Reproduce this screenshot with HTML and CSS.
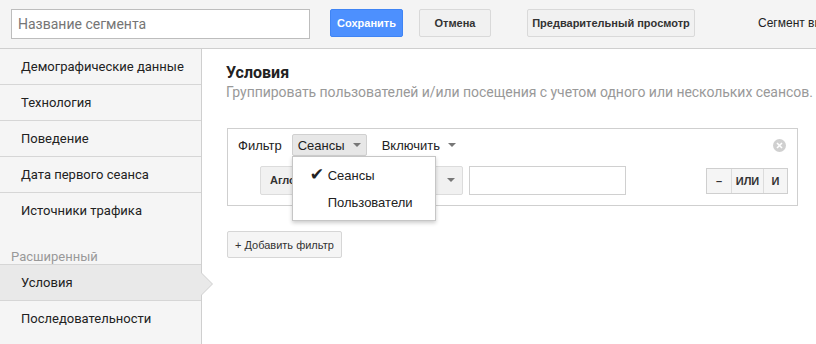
FILE: index.html
```html
<!DOCTYPE html>
<html lang="ru">
<head>
    <meta charset="UTF-8">
    <title>Сегмент</title>
    <link rel="stylesheet" href="styles.css">
</head>
<body>
    <div class="topbar">
        <input type="text" class="name-input" placeholder="Название сегмента">
        <button class="btn btn-save">Сохранить</button>
        <button class="btn btn-cancel">Отмена</button>
        <button class="btn btn-preview">Предварительный просмотр</button>
        <div class="seg-info">Сегмент ви</div>
    </div>

    <div class="layout">
        <div class="sidebar">
            <div class="nav-item">Демографические данные</div>
            <div class="nav-item">Технология</div>
            <div class="nav-item">Поведение</div>
            <div class="nav-item">Дата первого сеанса</div>
            <div class="nav-item nav-last">Источники трафика</div>
            <div class="nav-label">Расширенный</div>
            <div class="nav-item nav-active">Условия</div>
            <div class="nav-item nav-last">Последовательности</div>
        </div>

        <div class="main">
            <div class="title">Условия</div>
            <div class="subtitle">Группировать пользователей и/или посещения с учетом одного или нескольких сеансов.</div>

            <div class="filter-box">
                <div class="filter-row">
                    <span class="filter-label">Фильтр</span>
                    <div class="scope-wrap">
                        <span class="select select-open">Сеансы <span class="caret"></span></span>
                        <!-- open scope menu -->
                        <div class="menu">
                            <div class="menu-item"><span class="check">&#10004;</span>Сеансы</div>
                            <div class="menu-item">Пользователи</div>
                        </div>
                    </div>
                    <span class="select">Включить <span class="caret"></span></span>
                    <span class="close-icon">
                        <svg width="13" height="13" viewBox="0 0 13 13">
                            <circle cx="6.5" cy="6.5" r="6.5" fill="#d0d0d0"/>
                            <path d="M4 4 L9 9 M9 4 L4 9" stroke="#fff" stroke-width="1.6"/>
                        </svg>
                    </span>
                </div>
                <div class="filter-row row-cond">
                    <div class="dim-btn">
                        <span class="dim-text">Агло</span>
                        <span class="caret"></span>
                    </div>
                    <input type="text" class="cond-input">
                    <div class="logic">
                        <span class="logic-btn lb-minus">&ndash;</span>
                        <span class="logic-btn lb-or">ИЛИ</span>
                        <span class="logic-btn lb-and">И</span>
                    </div>
                </div>
            </div>

            <button class="add-btn">+ Добавить фильтр</button>
        </div>
    </div>
</body>
</html>
```

FILE: styles.css
```css
* { margin: 0; padding: 0; box-sizing: border-box; }

body {
    font-family: 'Liberation Sans', Arial, sans-serif;
    font-size: 13px;
    color: #222;
    background: #fff;
    overflow: hidden;
}

.topbar {
    height: 49px;
    background: #f4f4f4;
    border-bottom: 1px solid #cfcfcf;
    display: flex;
    align-items: center;
    padding-left: 11px;
    white-space: nowrap;
    overflow: hidden;
}

.topbar > * { flex-shrink: 0; }

.name-input {
    width: 299px;
    height: 30px;
    border: 1px solid #bdbdbd;
    background: #fff;
    padding: 0 6px;
    font-family: Roboto, sans-serif;
    font-size: 14px;
    color: #222;
    margin-top: -1px;
}

.name-input::placeholder { color: #757575; }

.btn {
    height: 28px;
    font-family: 'Liberation Sans', Arial, sans-serif;
    font-weight: bold;
    font-size: 11px;
    border-radius: 2px;
    cursor: pointer;
    margin-top: -3px;
}

.btn-save {
    width: 73px;
    margin-left: 20px;
    background: #4d90fe;
    border: 1px solid #3f84f4;
    color: #fff;
}

.btn-cancel {
    width: 72px;
    margin-left: 16px;
    background: #f1f1f1;
    border: 1px solid #d9d9d9;
    color: #333;
}

.btn-preview {
    width: 168px;
    margin-left: 36px;
    background: #f1f1f1;
    border: 1px solid #d9d9d9;
    color: #333;
}

.seg-info {
    margin-left: 63px;
    margin-top: -3px;
    font-size: 12px;
    color: #222;
}

.layout {
    display: flex;
    height: 295px;
}

.sidebar {
    width: 202px;
    flex-shrink: 0;
    background: #f5f5f5;
    border-right: 1px solid #cfcfcf;
    font-family: Roboto, sans-serif;
    font-size: 13px;
}

.nav-item {
    height: 36px;
    line-height: 35px;
    padding-left: 21px;
    border-bottom: 1px solid #d6d6d6;
    color: #222;
    position: relative;
}

.nav-last { border-bottom: none; }

.nav-label {
    height: 36px;
    padding: 21px 0 0 11px;
    color: #999;
    font-size: 13px;
    line-height: 14px;
    border-bottom: 1px solid #d6d6d6;
}

.nav-active {
    background: #e9e9e9;
}

/* pointer from active item into the panel */
.nav-active::before,
.nav-active::after {
    content: '';
    position: absolute;
    top: 8px;
    border-style: solid;
    border-color: transparent;
}

.nav-active::before {
    right: -12px;
    border-width: 11px 0 11px 11px;
    border-left-color: #cfcfcf;
}

.nav-active::after {
    right: -11px;
    border-width: 11px 0 11px 11px;
    border-left-color: #e9e9e9;
}

.main {
    flex: 1;
    padding: 14px 0 0 25px;
    white-space: nowrap;
    min-width: 0;
}

.title {
    font-family: Roboto, sans-serif;
    font-weight: bold;
    font-size: 16px;
    line-height: 20px;
    color: #222;
    margin-left: -1px;
}

.subtitle {
    font-family: Roboto, sans-serif;
    font-size: 14px;
    line-height: 18px;
    color: #999;
    letter-spacing: -0.05px;
    margin-left: -1px;
}

.filter-box {
    margin-top: 27px;
    width: 571px;
    border: 1px solid #cfcfcf;
    padding: 5px 9px 11px 10px;
}

.filter-row {
    display: flex;
    align-items: center;
    height: 22px;
}

.filter-label {
    margin-right: 10px;
}

.scope-wrap {
    position: relative;
    margin-right: 9px;
}

.select {
    display: inline-flex;
    align-items: center;
    height: 22px;
    padding: 0 6px 0 5px;
    color: #222;
    font-size: 13px;
    border: 1px solid transparent;
}

.select-open {
    background: #e7e7e7;
    border-color: #d0d0d0;
    border-radius: 2px;
    width: 75px;
}

.caret {
    display: inline-block;
    width: 0;
    height: 0;
    margin-left: 8px;
    border-left: 4px solid transparent;
    border-right: 4px solid transparent;
    border-top: 4px solid #777;
}

.menu {
    position: absolute;
    left: 0;
    top: 22px;
    width: 144px;
    height: 65px;
    background: #fff;
    border: 1px solid #c6c6c6;
    box-shadow: 0 2px 4px rgba(0, 0, 0, 0.2);
    padding-top: 5px;
    z-index: 2;
}

.menu-item {
    height: 27px;
    line-height: 27px;
    padding-left: 35px;
    position: relative;
    font-size: 13px;
}

.check {
    position: absolute;
    left: 17px;
    top: -1px;
    font-size: 17px;
    font-family: 'DejaVu Sans', sans-serif;
}

.close-icon {
    margin-left: auto;
    margin-right: 2px;
    display: flex;
}

.row-cond {
    margin-top: 10px;
    height: 28px;
    padding-left: 22px;
}

.dim-btn {
    width: 203px;
    height: 29px;
    background: #f1f1f1;
    border: 1px solid #dcdcdc;
    border-radius: 2px;
    display: flex;
    align-items: center;
    padding: 0 7px 0 9px;
}

.dim-text {
    font-weight: bold;
    font-size: 11px;
    color: #333;
    flex: 1;
}

.cond-input {
    width: 157px;
    height: 29px;
    margin-left: 6px;
    border: 1px solid #d0d0d0;
    background: #fff;
}

.logic {
    margin-left: auto;
    display: flex;
    height: 26px;
    border: 1px solid #cfcfcf;
    margin-top: 2px;
}

.logic-btn {
    display: flex;
    align-items: center;
    justify-content: center;
    background: #f5f5f5;
    font-weight: bold;
    font-size: 11px;
    color: #333;
    border-left: 1px solid #dcdcdc;
}

.lb-minus { border-left: none; width: 24px; }
.lb-or { width: 32px; }
.lb-and { width: 24px; }

.add-btn {
    margin-top: 25px;
    height: 27px;
    padding: 0 7px;
    background: #f5f5f5;
    border: 1px solid #d6d6d6;
    border-radius: 2px;
    font-family: 'Liberation Sans', Arial, sans-serif;
    font-size: 11px;
    color: #333;
    cursor: pointer;
}
```
